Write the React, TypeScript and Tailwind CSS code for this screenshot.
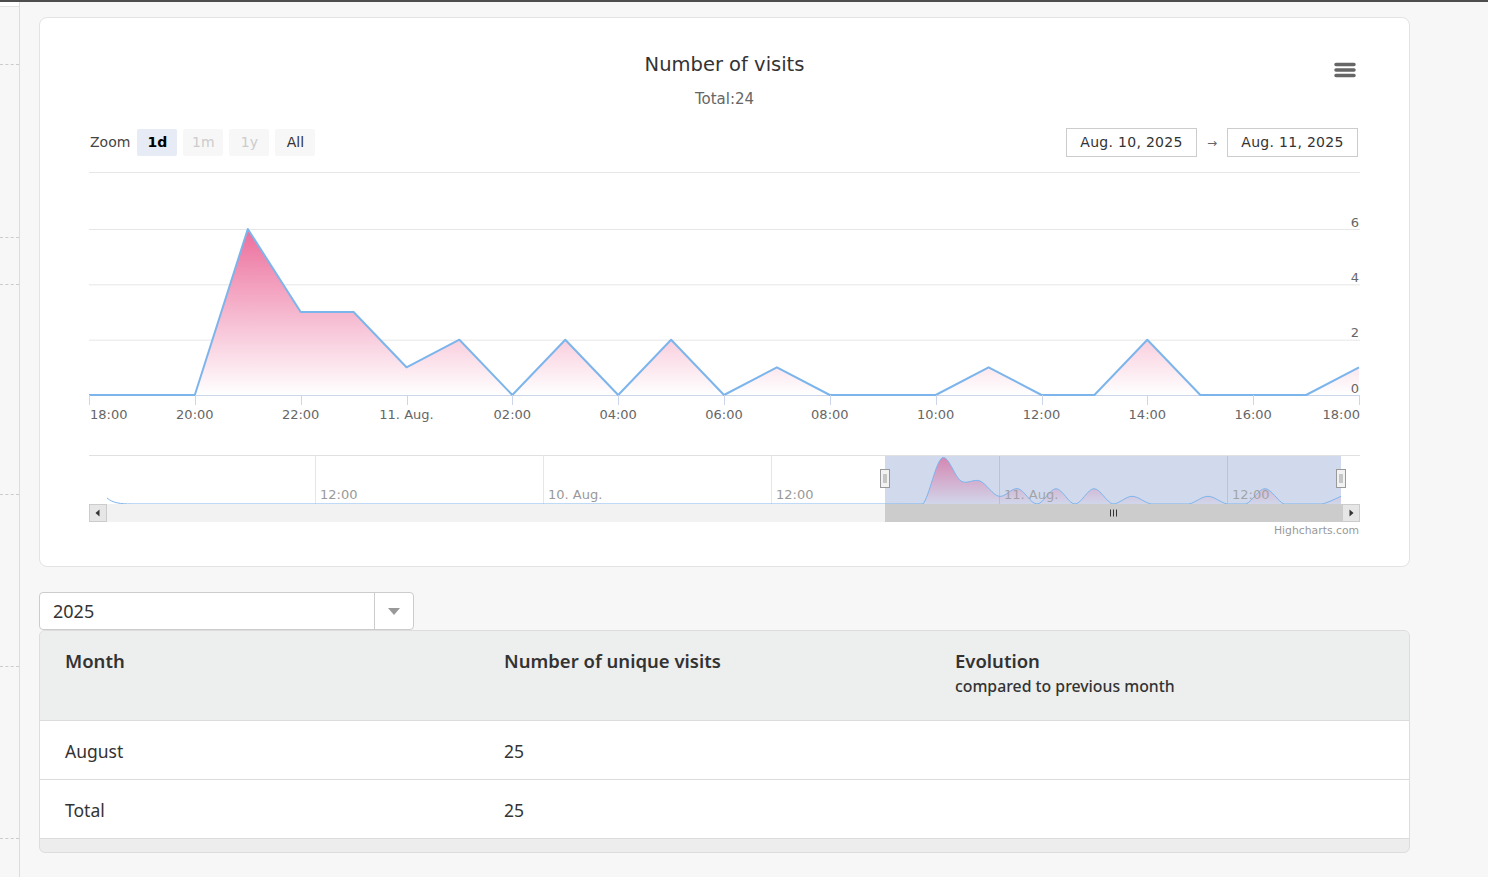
import React from "react";

// hourly visits, 18:00 (10 Aug) -> 18:00 (11 Aug)
const VISITS = [0, 0, 0, 6, 3, 3, 1, 2, 0, 2, 0, 2, 0, 1, 0, 0, 0, 1, 0, 0, 2, 0, 0, 0, 1];

const X_LABELS: Record<number, string> = {
  0: "18:00",
  2: "20:00",
  4: "22:00",
  6: "11. Aug.",
  8: "02:00",
  10: "04:00",
  12: "06:00",
  14: "08:00",
  16: "10:00",
  18: "12:00",
  20: "14:00",
  22: "16:00",
  24: "18:00",
};

const NAV_GRID = [
  { x: 235, label: "12:00" },
  { x: 463, label: "10. Aug." },
  { x: 691, label: "12:00" },
  { x: 919, label: "11. Aug." },
  { x: 1147, label: "12:00" },
];

const px = (i: number) => 9 + (i * 1270) / 24;
const py = (v: number) => 230 - (v * 166) / 6;
const nx = (i: number) => 805 + i * 19;
const ny = (v: number) => 339 - (v * 46) / 6;

function linePath() {
  return VISITS.map((v, i) => `${i ? "L" : "M"}${px(i).toFixed(1)} ${py(v).toFixed(1)}`).join(" ");
}

// catmull-rom -> bezier, close enough to the highcharts spline
function splinePath(pts: [number, number][]) {
  let d = `M${pts[0][0]} ${pts[0][1]}`;
  for (let i = 0; i < pts.length - 1; i++) {
    const p0 = pts[i - 1] ?? pts[i];
    const p1 = pts[i];
    const p2 = pts[i + 1];
    const p3 = pts[i + 2] ?? p2;
    const c1x = p1[0] + (p2[0] - p0[0]) / 6;
    const c1y = p1[1] + (p2[1] - p0[1]) / 6;
    const c2x = p2[0] - (p3[0] - p1[0]) / 6;
    const c2y = p2[1] - (p3[1] - p1[1]) / 6;
    d += ` C${c1x.toFixed(1)} ${Math.min(339, c1y).toFixed(1)} ${c2x.toFixed(1)} ${Math.min(339, c2y).toFixed(1)} ${p2[0].toFixed(1)} ${p2[1].toFixed(1)}`;
  }
  return d;
}

function VisitsChart() {
  const line = linePath();
  const area = `${line} L${px(24)} 230 L${px(0)} 230 Z`;
  const navPts = VISITS.map((v, i) => [nx(i), ny(v)] as [number, number]);
  const navLine = splinePath(navPts);
  const navArea = `${navLine} L${nx(24)} 339 L${nx(0)} 339 Z`;

  return (
    <svg width={1289} height={375} className="block" style={{ fontFamily: '"DejaVu Sans", Verdana, sans-serif' }}>
      <defs>
        <linearGradient id="mainFill" x1="0" y1="64" x2="0" y2="230" gradientUnits="userSpaceOnUse">
          <stop offset="0" stopColor="#ec6e9c" />
          <stop offset="1" stopColor="#ffffff" />
        </linearGradient>
        <linearGradient id="navFill" x1="0" y1="293" x2="0" y2="339" gradientUnits="userSpaceOnUse">
          <stop offset="0" stopColor="#d66c9f" />
          <stop offset="1" stopColor="#d66c9f" stopOpacity="0.05" />
        </linearGradient>
      </defs>

      {/* plot */}
      <line x1={9} x2={1280} y1={7.5} y2={7.5} stroke="#e6e6e6" />
      {[6, 4, 2].map((v) => (
        <line key={v} x1={9} x2={1280} y1={py(v) + 0.5} y2={py(v) + 0.5} stroke="#e6e6e6" />
      ))}
      <path d={area} fill="url(#mainFill)" />
      <line x1={9} x2={1280} y1={230.5} y2={230.5} stroke="#ccd6eb" />
      <path d={line} fill="none" stroke="#7cb5ec" strokeWidth={2} strokeLinejoin="round" />
      {Object.keys(X_LABELS).map((k) => {
        const i = Number(k);
        const x = Math.round(px(i)) + 0.5;
        return <line key={i} x1={x} x2={x} y1={230} y2={240} stroke="#ccd6eb" />;
      })}
      {Object.entries(X_LABELS).map(([k, label]) => {
        const i = Number(k);
        const anchor = i === 0 ? "start" : i === 24 ? "end" : "middle";
        const x = i === 0 ? 10 : i === 24 ? 1280 : px(i);
        return (
          <text key={k} x={x} y={253.5} textAnchor={anchor} fontSize={13} fill="#666666">
            {label}
          </text>
        );
      })}
      {[6, 4, 2, 0].map((v) => (
        <text key={v} x={1279} y={py(v) - 2.5} textAnchor="end" fontSize={13} fill="#666666">
          {v}
        </text>
      ))}

      {/* navigator */}
      <line x1={9} x2={1280} y1={290.5} y2={290.5} stroke="#e0e0e0" />
      {NAV_GRID.map((g) => (
        <line key={g.x} x1={g.x + 0.5} x2={g.x + 0.5} y1={290} y2={339} stroke="#e6e6e6" />
      ))}
      <path d="M27 333 C33 338 40 339 52 339 L805 339" fill="none" stroke="#7cb5ec" />
      <rect x={805} y={291} width={456} height={48} fill="#6685c2" fillOpacity={0.3} />
      {NAV_GRID.map((g) => (
        <line key={`m${g.x}`} x1={g.x + 0.5} x2={g.x + 0.5} y1={291} y2={339} stroke="#b9c4d9" strokeOpacity={g.x > 805 ? 1 : 0} />
      ))}
      <path d={navArea} fill="url(#navFill)" fillOpacity={0.75} />
      <path d={navLine} fill="none" stroke="#7cb5ec" strokeWidth={1} />
      {NAV_GRID.map((g) => (
        <text key={`t${g.x}`} x={g.x + 5} y={333.5} fontSize={13} fill="#999999" fillOpacity={g.x > 805 ? 0.85 : 1}>
          {g.label}
        </text>
      ))}
      {[800.5, 1256.5].map((x) => (
        <g key={x}>
          <rect x={x} y={304.5} width={9} height={18} fill="#f2f2f2" stroke="#999999" />
          <line x1={x + 3.5} x2={x + 3.5} y1={309} y2={318} stroke="#999999" />
          <line x1={x + 5.5} x2={x + 5.5} y1={309} y2={318} stroke="#999999" />
        </g>
      ))}

      {/* scrollbar */}
      <rect x={9} y={339} width={1271} height={18} fill="#f2f2f2" />
      <rect x={9.5} y={339.5} width={17} height={17} fill="#e6e6e6" stroke="#cccccc" />
      <path d="M19.5 344.5 L15.5 348 L19.5 351.5 Z" fill="#333333" />
      <rect x={805} y={339} width={457} height={18} fill="#cccccc" />
      {[1030.5, 1033.5, 1036.5].map((x) => (
        <line key={x} x1={x} x2={x} y1={344.5} y2={351.5} stroke="#333333" />
      ))}
      <rect x={1262.5} y={339.5} width={17} height={17} fill="#e6e6e6" stroke="#cccccc" />
      <path d="M1269.5 344.5 L1273.5 348 L1269.5 351.5 Z" fill="#333333" />

      <text x={1279} y={368.5} textAnchor="end" fontSize={10.8} fill="#999999">
        Highcharts.com
      </text>
    </svg>
  );
}

function ZoomButton({ label, state }: { label: string; state: "active" | "off" | "on" }) {
  const cls =
    state === "active"
      ? "bg-[#e6ebf5] text-black font-bold"
      : state === "off"
        ? "bg-[#f7f7f7] text-[#cccccc]"
        : "bg-[#f7f7f7] text-[#333333]";
  return (
    <div className={`w-[40px] h-[27px] rounded-[2px] flex items-center justify-center text-[14px] ${cls}`}>{label}</div>
  );
}

function ChartCard() {
  return (
    <div className="relative w-[1371px] bg-white border border-[#e3e3e3] rounded-[8px] pt-[35px] pb-[26px]">
      <div className="text-center text-[19.5px] leading-[24px] text-[#333333]" style={{ fontFamily: '"DejaVu Sans", sans-serif' }}>
        Number of visits
      </div>
      <div className="mt-[13px] text-center text-[15px] leading-[18px] text-[#666666]" style={{ fontFamily: '"DejaVu Sans", sans-serif' }}>
        Total:24
      </div>

      <svg className="absolute right-[52px] top-[43px]" width={24} height={18} viewBox="0 0 24 18">
        <path d="M3 3.5 H21 M3 9 H21 M3 14.5 H21" stroke="#666666" strokeWidth={3.5} strokeLinecap="round" />
      </svg>

      <div
        className="mt-[20px] ml-[50px] mr-[51px] flex items-center justify-between"
        style={{ fontFamily: '"DejaVu Sans", sans-serif' }}
      >
        <div className="flex items-center gap-[6px]">
          <span className="text-[14px] text-[#444444] mr-[1px]">Zoom</span>
          <ZoomButton label="1d" state="active" />
          <ZoomButton label="1m" state="off" />
          <ZoomButton label="1y" state="off" />
          <ZoomButton label="All" state="on" />
        </div>
        <div className="flex items-center">
          <div className="w-[131px] h-[29px] border border-[#cccccc] flex items-center justify-center text-[14px] text-[#333333] tracking-[0.3px]">
            Aug. 10, 2025
          </div>
          <span className="w-[30px] text-center text-[12px] text-[#666666]">→</span>
          <div className="w-[131px] h-[29px] border border-[#cccccc] flex items-center justify-center text-[14px] text-[#333333] tracking-[0.3px]">
            Aug. 11, 2025
          </div>
        </div>
      </div>

      <div className="mt-[8px] ml-[40px]">
        <VisitsChart />
      </div>
    </div>
  );
}

function YearSelect() {
  return (
    <div className="w-[375px] h-[38px] bg-white border border-[#cccccc] rounded-[4px] flex items-stretch">
      <div className="flex-1 flex items-center pl-[13px] text-[18px] text-[#333333]">2025</div>
      <div className="w-[39px] border-l border-[#cccccc] flex items-center justify-center">
        <svg width={12} height={7} viewBox="0 0 12 7">
          <path d="M0 0 H12 L6 7 Z" fill="#999999" />
        </svg>
      </div>
    </div>
  );
}

const ROWS = [
  { month: "August", visits: "25" },
  { month: "Total", visits: "25" },
];

function VisitsTable() {
  return (
    <div className="w-[1371px] border border-[#dddddd] rounded-[6px] overflow-hidden bg-[#ededed] text-[#333333]">
      <div className="grid grid-cols-[440px_451px_1fr] bg-[#edeeee] h-[90px] border-b border-[#dcdcdc] pt-[18px]">
        <div className="pl-[25px] text-[18.5px] leading-[24px] font-semibold">Month</div>
        <div className="pl-[24px] text-[18.5px] leading-[24px] font-semibold">Number of unique visits</div>
        <div className="pl-[24px]">
          <div className="text-[18.5px] leading-[24px] font-semibold">Evolution</div>
          <div className="mt-[3px] text-[15.8px] leading-[20px] font-medium">compared to previous month</div>
        </div>
      </div>
      {ROWS.map((r) => (
        <div key={r.month} className="grid grid-cols-[440px_451px_1fr] bg-white h-[59px] border-b border-[#dcdcdc] items-center">
          <div className="pl-[25px] text-[17.5px] pt-[2px]">{r.month}</div>
          <div className="pl-[24px] text-[17.5px] pt-[2px]">{r.visits}</div>
          <div />
        </div>
      ))}
      <div className="h-[13px]" />
    </div>
  );
}

const SIDE_MARKS = [58, 173, 47, 210, 172, 172];

export default function App() {
  return (
    <div className="min-h-screen bg-[#f7f7f7]" style={{ fontFamily: '"Noto Sans", "Open Sans", sans-serif' }}>
      <div className="h-[2px] bg-[#4d4d4d]" />
      <div className="flex">
        <div className="w-[20px] shrink-0 border-r border-[#dddddd] min-h-[875px]">
          <div className="h-[5px] bg-white border-b border-[#e2e2e2]" />
          {SIDE_MARKS.map((h, i) => (
            <div key={i} className="border-b border-dashed border-[#cccccc]" style={{ height: h }} />
          ))}
        </div>
        <div className="flex-1 pl-[19px] pt-[15px]">
          <ChartCard />
          <div className="mt-[25px]">
            <YearSelect />
          </div>
          <VisitsTable />
        </div>
      </div>
    </div>
  );
}
